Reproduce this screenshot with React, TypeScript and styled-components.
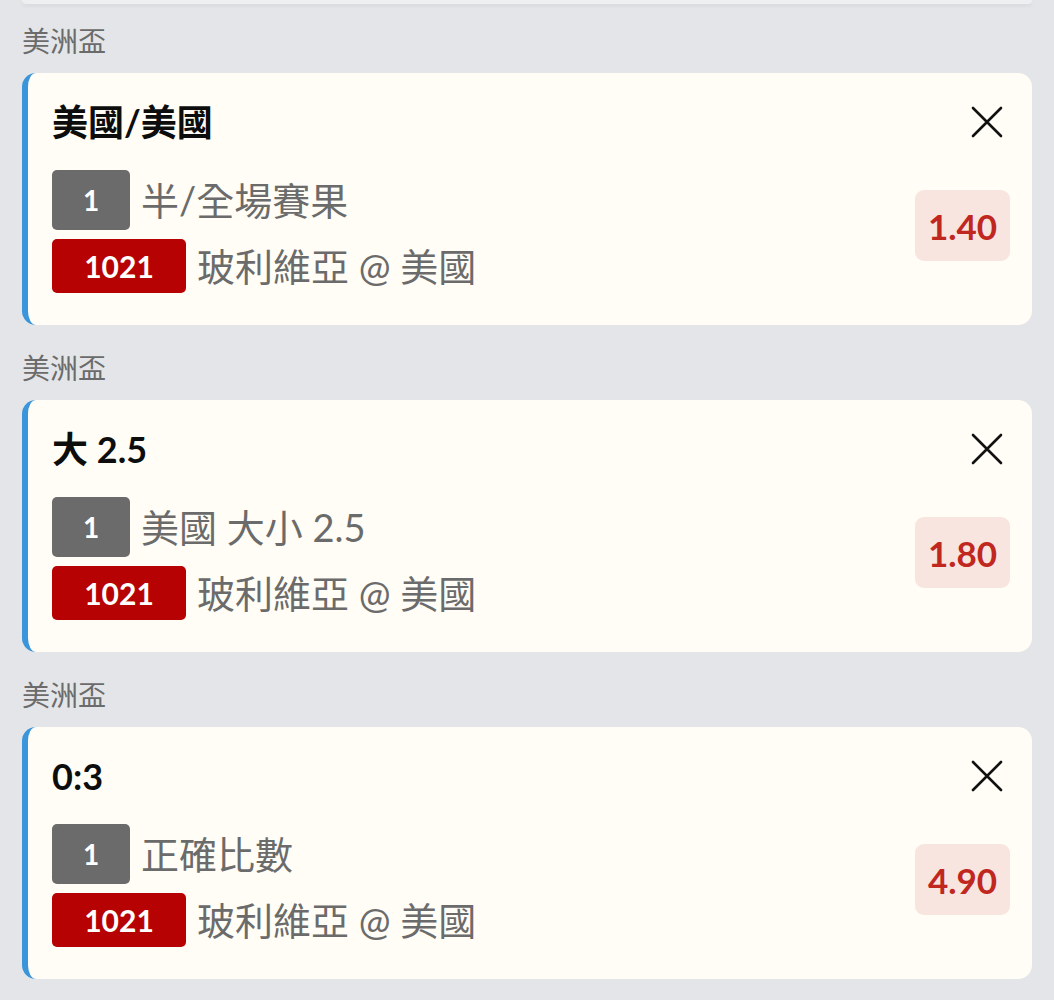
import * as React from "react";
import styled, { createGlobalStyle } from "styled-components";

const GlobalStyle = createGlobalStyle`
  html, body {
    margin: 0;
    padding: 0;
    background: #e3e5e8;
  }
  body {
    font-family: "Lato", "Noto Sans CJK TC", sans-serif;
  }
`;

const SPage = styled.div`
  min-height: 1000px;
  box-sizing: border-box;
  background: #e3e5e8;
  padding: 0 22px 20px;
`;

const STopEdge = styled.div`
  height: 4px;
  background: #eeeff1;
  border-radius: 0 0 14px 14px;
  box-shadow: 0 2px 4px rgba(0, 0, 0, 0.06);
  margin-bottom: 19px;
`;

const SList = styled.div`
  display: grid;
  grid-gap: 25px;
`;

const SGroup = styled.section`
  display: grid;
  grid-gap: 14px;
`;

const SLeague = styled.div`
  height: 36px;
  line-height: 36px;
  font-size: 28px;
  color: #6b6b6b;
`;

const SCard = styled.div`
  background: #fffdf5;
  border-left: 6px solid #3a95da;
  border-radius: 14px;
  padding: 27px 22px 32px 24px;
  height: 252px;
  box-sizing: border-box;
  display: flex;
  flex-direction: column;
`;

const SHead = styled.div`
  display: flex;
  align-items: center;
  justify-content: space-between;
  height: 44px;
`;

const STitle = styled.h2`
  margin: 0;
  font-size: 36px;
  font-weight: 700;
  line-height: 44px;
  color: #0d0d0d;
`;

const SClose = styled.button`
  border: none;
  background: none;
  padding: 0;
  width: 34px;
  height: 34px;
  margin-right: 6px;
  display: grid;
  place-items: center;
  cursor: pointer;
`;

const SBody = styled.div`
  display: flex;
  justify-content: space-between;
  align-items: flex-start;
  margin-top: 26px;
`;

const SRows = styled.div`
  display: grid;
  grid-gap: 9px;
`;

const SRow = styled.div`
  display: flex;
  align-items: center;
  gap: 11px;
`;

const SBadge = styled.span<{ $tone: "gray" | "red" }>`
  display: inline-flex;
  align-items: center;
  justify-content: center;
  box-sizing: border-box;
  border-radius: 5px;
  color: #fff;
  font-weight: 700;
  background: ${({ $tone }) => ($tone === "gray" ? "#6b6b6b" : "#b60202")};
  width: ${({ $tone }) => ($tone === "gray" ? "78px" : "134px")};
  height: ${({ $tone }) => ($tone === "gray" ? "60px" : "54px")};
  font-size: ${({ $tone }) => ($tone === "gray" ? "28px" : "30px")};
`;

const SRowText = styled.span`
  font-size: 38px;
  line-height: 44px;
  color: #6b6b6b;
`;

const SOdds = styled.div`
  margin-top: 20px;
  width: 95px;
  height: 71px;
  border-radius: 9px;
  background: #f8e5e0;
  color: #c0271f;
  font-size: 35px;
  font-weight: 700;
  display: flex;
  align-items: center;
  justify-content: center;
`;

const CloseIcon = () => (
  <svg width="34" height="34" viewBox="0 0 34 34" fill="none">
    <path
      d="M3 3L31 31M31 3L3 31"
      stroke="#111"
      strokeWidth="2.6"
      strokeLinecap="round"
    />
  </svg>
);

interface Bet {
  title: string;
  market: string;
  odds: string;
}

const bets: Bet[] = [
  { title: "美國/美國", market: "半/全場賽果", odds: "1.40" },
  { title: "大 2.5", market: "美國 大小 2.5", odds: "1.80" },
  { title: "0:3", market: "正確比數", odds: "4.90" },
];

const BetCard = ({ bet }: { bet: Bet }) => (
  <SGroup>
    <SLeague>美洲盃</SLeague>
    <SCard>
      <SHead>
        <STitle>{bet.title}</STitle>
        <SClose aria-label="close">
          <CloseIcon />
        </SClose>
      </SHead>
      <SBody>
        <SRows>
          <SRow>
            <SBadge $tone="gray">1</SBadge>
            <SRowText>{bet.market}</SRowText>
          </SRow>
          <SRow>
            <SBadge $tone="red">1021</SBadge>
            <SRowText>玻利維亞 @ 美國</SRowText>
          </SRow>
        </SRows>
        <SOdds>{bet.odds}</SOdds>
      </SBody>
    </SCard>
  </SGroup>
);

const App = () => (
  <>
    <GlobalStyle />
    <SPage>
      <STopEdge />
      <SList>
        {bets.map((b) => (
          <BetCard key={b.title} bet={b} />
        ))}
      </SList>
    </SPage>
  </>
);

export default App;
